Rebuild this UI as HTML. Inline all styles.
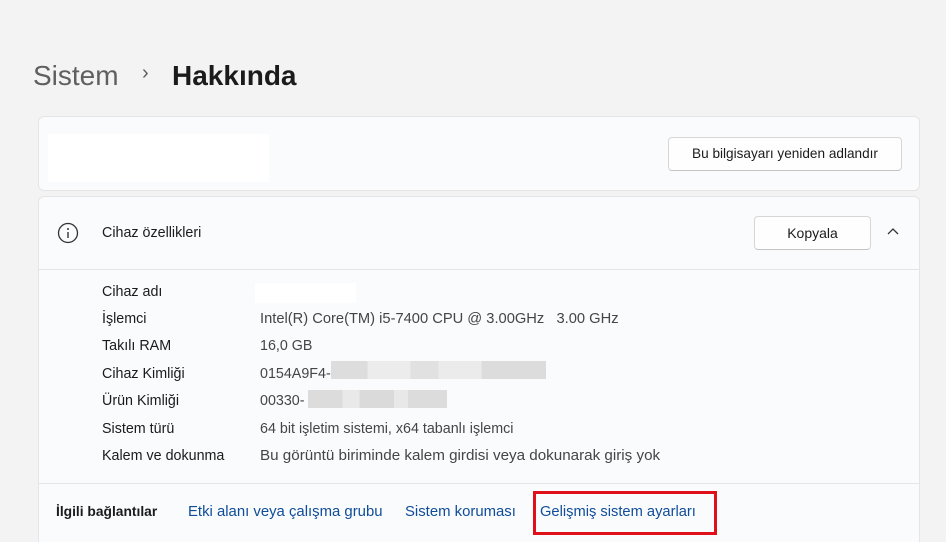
<!DOCTYPE html><html><head><meta charset="utf-8"><style>
*{margin:0;padding:0;box-sizing:border-box}
html,body{width:946px;height:542px;overflow:hidden}
body{background:#f3f3f3;font-family:"Liberation Sans",sans-serif;color:#1b1b1b;position:relative}
.a{position:absolute;white-space:nowrap;line-height:20px}
.card{position:absolute;left:38px;width:882px;background:#fafbfc;border:1px solid #e5e5e5;border-radius:6px}
.btn{position:absolute;background:#fefefe;border:1px solid #d6d6d6;border-bottom-color:#c4c4c4;border-radius:4px;font-size:14px;text-align:center}
.l{font-size:14.3px;color:#1b1b1b}
.v{font-size:14.3px;color:#454545}
.lk{font-size:14.4px;color:#0f4c9a}
.blur{position:absolute;background:#e3e3e3}
</style></head><body>
<div class="a" style="left:33px;top:62px;font-size:28px;line-height:28px;color:#5f5f5f">Sistem</div>
<div class="a" style="left:142px;top:63px;font-size:20px;color:#5f5f5f">›</div>
<div class="a" style="left:172px;top:62px;font-size:28px;line-height:28px;font-weight:bold;color:#1b1b1b">Hakkında</div>
<div class="card" style="top:116px;height:75px"></div>
<div class="a" style="left:48px;top:134px;width:221px;height:48px;background:#fff"></div>
<div class="btn" style="left:668px;top:137px;width:234px;height:34px;line-height:32px;font-size:13.6px">Bu bilgisayarı yeniden adlandır</div>
<div class="card" style="top:196px;height:360px"></div>
<div class="a" style="left:39px;top:269px;width:880px;height:1px;background:#e5e5e5"></div>
<div class="a" style="left:39px;top:483px;width:880px;height:1px;background:#e5e5e5"></div>
<svg class="a" style="left:57px;top:222px" width="22" height="22" viewBox="0 0 22 22"><circle cx="11" cy="11" r="9.5" fill="none" stroke="#333" stroke-width="1.3"/><circle cx="11" cy="7" r="1" fill="#333"/><path d="M11 10v6" stroke="#333" stroke-width="1.4"/></svg>
<div class="a l" style="left:102px;top:223px">Cihaz özellikleri</div>
<div class="btn" style="left:754px;top:216px;width:117px;height:34px;line-height:32px">Kopyala</div>
<svg class="a" style="left:886px;top:227px" width="14" height="10" viewBox="0 0 14 10"><path d="M2 7l5-5 5 5" fill="none" stroke="#333" stroke-width="1.3"/></svg>
<div class="a l" style="left:102px;top:282px">Cihaz adı</div>
<div class="a" style="left:255px;top:283px;width:101px;height:20px;background:#fff"></div>
<div class="a l" style="left:102px;top:309px">İşlemci</div><div class="a v" style="left:260px;top:309px;font-size:14.7px">Intel(R) Core(TM) i5-7400 CPU @ 3.00GHz &nbsp; 3.00 GHz</div>
<div class="a l" style="left:102px;top:336px">Takılı RAM</div><div class="a v" style="left:260px;top:336px">16,0 GB</div>
<div class="a l" style="left:102px;top:364px">Cihaz Kimliği</div><div class="a v" style="left:260px;top:364px">0154A9F4-</div>
<div class="blur" style="left:331px;top:361px;width:215px;height:18px;background:linear-gradient(90deg,#ddd 0 17%,#ececec 17% 37%,#e1e1e1 37% 50%,#ebebeb 50% 70%,#dcdcdc 70% 100%)"></div>
<div class="a l" style="left:102px;top:391px">Ürün Kimliği</div><div class="a v" style="left:260px;top:391px">00330-</div>
<div class="blur" style="left:308px;top:390px;width:139px;height:18px;background:linear-gradient(90deg,#dcdcdc 0 25%,#e9e9e9 25% 37%,#dadada 37% 62%,#e8e8e8 62% 72%,#dcdcdc 72% 100%)"></div>
<div class="a l" style="left:102px;top:419px">Sistem türü</div><div class="a v" style="left:260px;top:419px">64 bit işletim sistemi, x64 tabanlı işlemci</div>
<div class="a l" style="left:102px;top:446px">Kalem ve dokunma</div><div class="a v" style="left:260px;top:446px;font-size:15.2px">Bu görüntü biriminde kalem girdisi veya dokunarak giriş yok</div>
<div class="a l" style="left:56px;top:502px;font-weight:bold;font-size:13.8px">İlgili bağlantılar</div>
<div class="a lk" style="left:188px;top:502px;font-size:14.9px">Etki alanı veya çalışma grubu</div>
<div class="a lk" style="left:405px;top:502px;font-size:14.9px">Sistem koruması</div>
<div class="a lk" style="left:540px;top:502px;font-size:14.7px">Gelişmiş sistem ayarları</div>
<div class="a" style="left:533px;top:491px;width:184px;height:44px;border:3px solid #e0101a"></div>
</body></html>
